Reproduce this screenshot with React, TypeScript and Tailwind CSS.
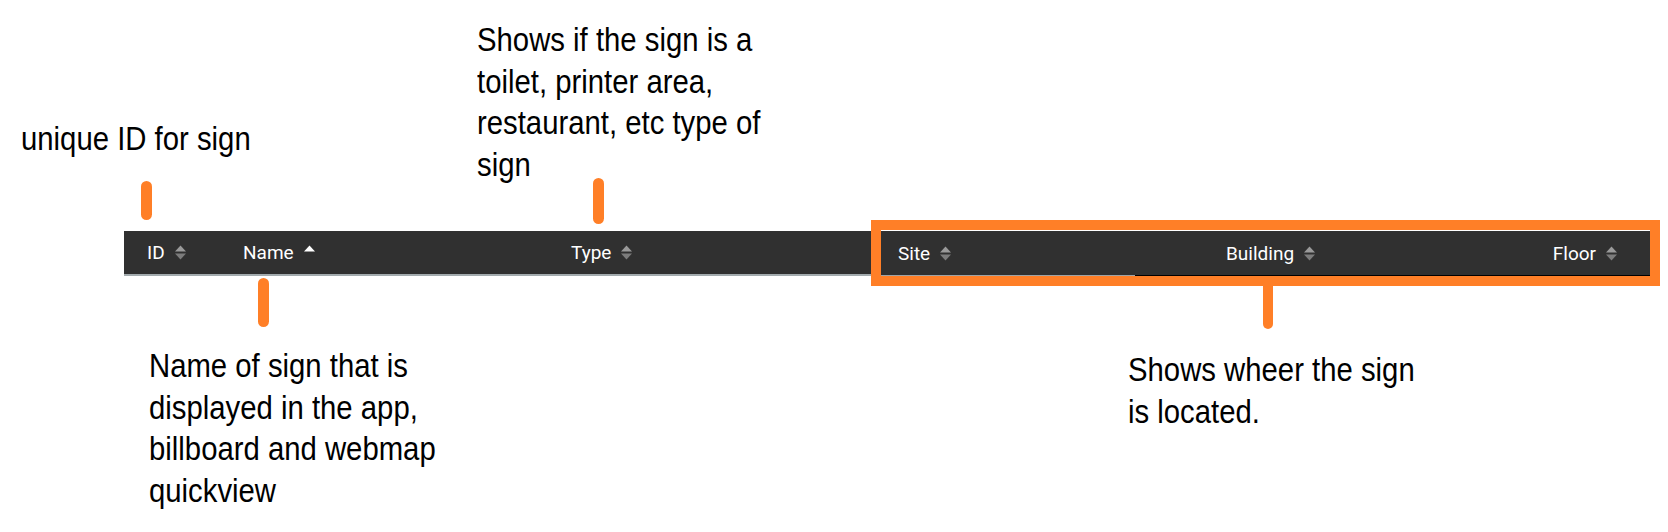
import React from "react";

const SortIcon = () => (
  <svg width="11" height="15" viewBox="0 0 11 15" className="shrink-0">
    <polygon points="0,6.5 5.5,0.5 11,6.5" fill="#9a9a9a" />
    <polygon points="0,8.5 5.5,14.5 11,8.5" fill="#7c7c7c" />
  </svg>
);

const UpIcon = () => (
  <svg width="11" height="15" viewBox="0 0 11 15" className="shrink-0">
    <polygon points="0,6.5 5.5,0.5 11,6.5" fill="#ffffff" />
  </svg>
);

const HeadCell = ({ label, icon, className = "" }: { label: string; icon: React.ReactNode; className?: string }) => (
  <div className={`flex items-center gap-[10px] ${className}`}>
    <span className="text-[19px] font-normal text-white leading-none">{label}</span>
    {icon}
  </div>
);

const Note = ({ lines, className }: { lines: string[]; className: string }) => (
  <div className={`absolute text-black origin-left scale-x-[0.888] whitespace-nowrap text-[33px] leading-[41.5px] ${className}`}>
    {lines.map((l, i) => (
      <div key={i}>{l}</div>
    ))}
  </div>
);

export default function App() {
  return (
    <div
      className="relative w-[1668px] h-[532px] bg-white overflow-hidden"
      style={{ fontFamily: '"Liberation Sans", Arial, sans-serif' }}
    >
      {/* table header */}
      <div className="pt-[220px] flex items-center" style={{ fontFamily: 'Roboto, "Liberation Sans", sans-serif' }}>
        <div className="ml-[124px] w-[747px] h-[45px] flex flex-col">
          <div className="h-[43px] bg-[#303030] flex items-center pl-[23px]">
            <HeadCell label="ID" icon={<SortIcon />} className="w-[96px]" />
            <HeadCell label="Name" icon={<UpIcon />} className="w-[328px]" />
            <HeadCell label="Type" icon={<SortIcon />} />
          </div>
          <div className="h-[2px] bg-[#a3abae]" />
        </div>
        <div className="w-[789px] h-[66px] border-[10px] border-[#ff7f27] flex flex-col">
          <div className="h-px bg-white" />
          <div className="flex-1 bg-[#303030] flex items-center pl-[17px] pr-[33px]">
            <HeadCell label="Site" icon={<SortIcon />} className="w-[328px]" />
            <HeadCell label="Building" icon={<SortIcon />} />
            <HeadCell label="Floor" icon={<SortIcon />} className="ml-auto" />
          </div>
          <div className="h-px flex">
            <div className="w-[254px] bg-[#a0a4a6]" />
            <div className="flex-1 bg-black" />
          </div>
        </div>
      </div>

      {/* annotations */}
      <Note lines={["unique ID for sign"]} className="left-[21px] top-[118px]" />
      <Note
        lines={["Shows if the sign is a", "toilet, printer area,", "restaurant, etc type of", "sign"]}
        className="left-[477px] top-[19px]"
      />
      <Note
        lines={["Name of sign that is", "displayed in the app,", "billboard and webmap", "quickview"]}
        className="left-[149px] top-[345px]"
      />
      <Note lines={["Shows wheer the sign", "is located."]} className="left-[1128px] top-[349px]" />

      {/* callout stems */}
      <div className="absolute left-[141px] top-[181px] w-[11px] h-[39px] rounded-full bg-[#ff7f27]" />
      <div className="absolute left-[593px] top-[178px] w-[11px] h-[46px] rounded-full bg-[#ff7f27]" />
      <div className="absolute left-[258px] top-[278px] w-[11px] h-[49px] rounded-full bg-[#ff7f27]" />
      <div className="absolute left-[1263px] top-[280px] w-[10px] h-[49px] rounded-b-full bg-[#ff7f27]" />
    </div>
  );
}
